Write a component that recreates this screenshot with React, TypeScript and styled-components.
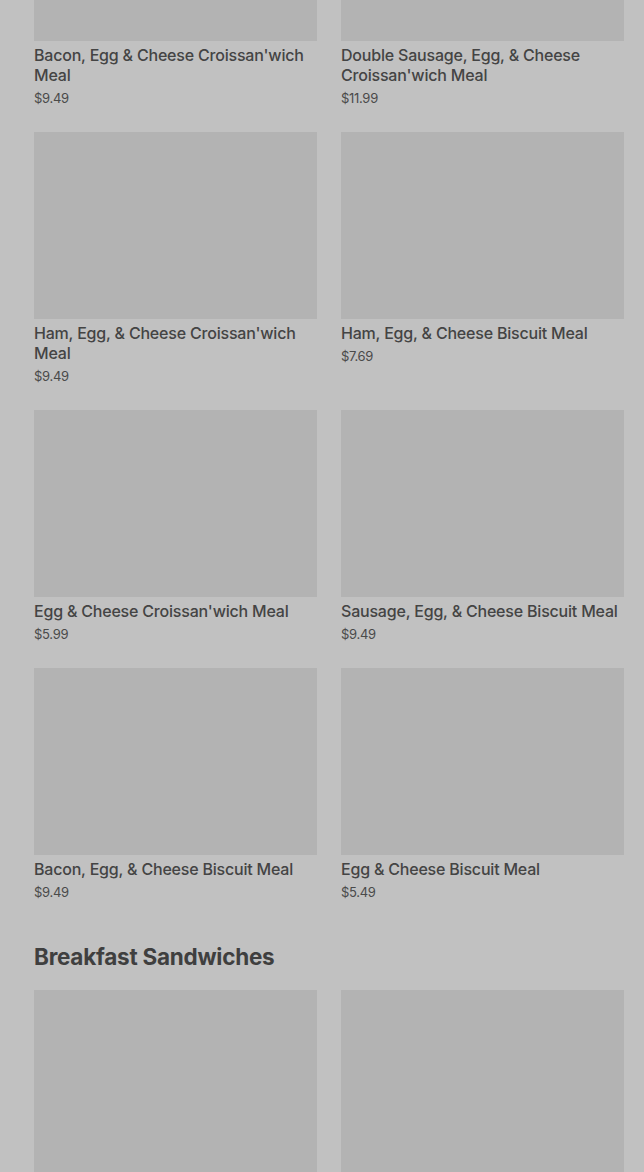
import styled, { createGlobalStyle } from 'styled-components';

const GlobalStyle = createGlobalStyle`
  html, body {
    margin: 0;
    padding: 0;
    background: #c1c1c1;
    overflow: hidden;
  }
  body {
    font-family: Inter, Roboto, "Liberation Sans", Arial, sans-serif;
    -webkit-font-smoothing: antialiased;
  }
`;

type Item = { name: string; price: string };

const meals: Item[] = [
  { name: "Bacon, Egg & Cheese Croissan'wich Meal", price: '$9.49' },
  { name: "Double Sausage, Egg, & Cheese Croissan'wich Meal", price: '$11.99' },
  { name: "Ham, Egg, & Cheese Croissan'wich Meal", price: '$9.49' },
  { name: 'Ham, Egg, & Cheese Biscuit Meal', price: '$7.69' },
  { name: "Egg & Cheese Croissan'wich Meal", price: '$5.99' },
  { name: 'Sausage, Egg, & Cheese Biscuit Meal', price: '$9.49' },
  { name: 'Bacon, Egg, & Cheese Biscuit Meal', price: '$9.49' },
  { name: 'Egg & Cheese Biscuit Meal', price: '$5.49' },
];

const sandwiches: Item[] = [
  { name: "Bacon, Egg & Cheese Croissan'wich", price: '$5.49' },
  { name: "Sausage, Egg & Cheese Croissan'wich", price: '$5.49' },
];

// page is shown scrolled part-way down the menu
const Page = styled.main`
  margin-top: -146px;
  padding: 0 20px 40px 34px;
`;

const Section = styled.section`
  & + & {
    margin-top: 39px;
  }
`;

const SectionTitle = styled.h2`
  margin: 0 0 17px;
  font-size: 22.5px;
  line-height: 32px;
  font-weight: 700;
  color: #3f3f3f;
  letter-spacing: -0.25px;
`;

const Grid = styled.div`
  display: grid;
  grid-template-columns: repeat(2, 283px);
  column-gap: 24px;
  row-gap: 24px;
`;

const Card = styled.a`
  display: flex;
  flex-direction: column;
  text-decoration: none;
  cursor: pointer;
`;

const Thumb = styled.div`
  height: 187px;
  background: #b3b3b3;
  margin-bottom: 4px;
`;

const Name = styled.div`
  font-size: 16px;
  line-height: 20px;
  font-weight: 500;
  color: #444444;
  letter-spacing: -0.2px;
`;

const Price = styled.div`
  margin-top: 3px;
  font-size: 13px;
  line-height: 20px;
  color: #4a4a4a;
  letter-spacing: -0.3px;
`;

const MenuCard = ({ item }: { item: Item }) => (
  <Card>
    <Thumb />
    <Name>{item.name}</Name>
    <Price>{item.price}</Price>
  </Card>
);

export default function App() {
  return (
    <>
      <GlobalStyle />
      <Page>
        <Section>
          <Grid>
            {meals.map((m) => (
              <MenuCard key={m.name} item={m} />
            ))}
          </Grid>
        </Section>
        <Section>
          <SectionTitle>Breakfast Sandwiches</SectionTitle>
          <Grid>
            {sandwiches.map((m) => (
              <MenuCard key={m.name} item={m} />
            ))}
          </Grid>
        </Section>
      </Page>
    </>
  );
}
